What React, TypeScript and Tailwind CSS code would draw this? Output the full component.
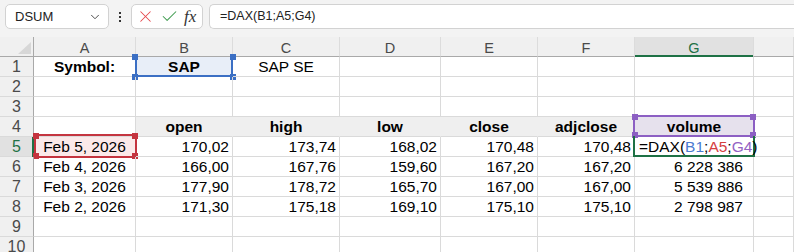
import React from "react";
import { ChevronDown, X, Check } from "lucide-react";

// column widths incl. right gridline: row header, A..G, H (cut off)
const COLS = [34, 102, 97, 107, 101, 97, 97, 119, 40];
const LETTERS = ["", "A", "B", "C", "D", "E", "F", "G", ""];

const rows: { date: string; v: string[]; vol: string }[] = [
  { date: "Feb 5, 2026", v: ["170,02", "173,74", "168,02", "170,48", "170,48"], vol: "" },
  { date: "Feb 4, 2026", v: ["166,00", "167,76", "159,60", "167,20", "167,20"], vol: "6 228 386" },
  { date: "Feb 3, 2026", v: ["177,90", "178,72", "165,70", "167,00", "167,00"], vol: "5 539 886" },
  { date: "Feb 2, 2026", v: ["171,30", "175,18", "169,10", "175,10", "175,10"], vol: "2 798 987" },
];

const Corners = ({ color }: { color: string }) => (
  <>
    <span className={`absolute -left-[3px] -top-[3px] h-[6px] w-[6px] ${color}`} />
    <span className={`absolute -right-[3px] -top-[3px] h-[6px] w-[6px] ${color}`} />
    <span className={`absolute -left-[3px] -bottom-[3px] h-[6px] w-[6px] ${color}`} />
    <span className={`absolute -right-[3px] -bottom-[3px] h-[6px] w-[6px] ${color}`} />
  </>
);

const Cell = ({
  col,
  className = "",
  children,
}: {
  col: number;
  className?: string;
  children?: React.ReactNode;
}) => (
  <div
    style={{ width: COLS[col] }}
    className={`relative h-[20px] shrink-0 border-b border-r border-[#dadada] leading-[19px] whitespace-nowrap ${className}`}
  >
    {children}
  </div>
);

const RowHead = ({ n, active = false }: { n: number; active?: boolean }) => (
  <div
    style={{ width: COLS[0] }}
    className={`relative h-[20px] shrink-0 border-b border-r border-b-[#dadada] border-r-[#a9a9a9] text-center text-[16px] leading-[20px] ${
      active ? "bg-[#e1e1e1] text-[#1e7145]" : "bg-[#f0f0f0] text-[#4a4a4a]"
    }`}
  >
    {n}
    {active && <span className="absolute -right-[1px] top-0 h-[20px] w-[2px] bg-[#1e7145]" />}
  </div>
);

const EmptyRow = ({ n }: { n: number }) => (
  <div className="flex">
    <RowHead n={n} />
    {[1, 2, 3, 4, 5, 6, 7, 8].map((c) => (
      <Cell key={c} col={c} />
    ))}
  </div>
);

export default function App() {
  return (
    <div className="h-[252px] w-[794px] overflow-hidden bg-white font-['Liberation_Sans',Arial,sans-serif] text-[15.5px] text-black">
      {/* formula bar */}
      <div className="flex h-[37px] items-start bg-[#f3f3f3] pl-[5px] pt-[4px]">
        <div className="flex h-[25px] w-[104px] items-center justify-between rounded-[5px] border border-[#d2d2d2] bg-white pl-[9px] pr-[6px] text-[13px] text-[#222]">
          <span>DSUM</span>
          <ChevronDown size={14} strokeWidth={1.6} className="text-[#444]" />
        </div>
        <div className="flex h-[25px] w-[22px] flex-col items-center justify-center gap-[2px]">
          <span className="h-[2px] w-[2px] bg-[#333]" />
          <span className="h-[2px] w-[2px] bg-[#333]" />
          <span className="h-[2px] w-[2px] bg-[#333]" />
        </div>
        <div className="flex h-[25px] w-[72px] items-center gap-[5px] rounded-[5px] border border-[#d2d2d2] bg-white pl-[4px]">
          <X size={19} strokeWidth={1.3} className="text-[#e5484d]" />
          <Check size={19} strokeWidth={1.3} className="text-[#3e9b4f]" />
          <span className="font-['Liberation_Serif',serif] text-[17px] italic leading-none text-[#333]">fx</span>
        </div>
        <div className="ml-[6px] flex h-[25px] flex-1 items-center rounded-l-[5px] border border-r-0 border-[#d2d2d2] bg-white pl-[10px] text-[12.5px] text-[#222]">
          =DAX(B1;A5;G4)
        </div>
      </div>

      {/* column headers */}
      <div className="flex">
        {COLS.map((w, i) => (
          <div
            key={i}
            style={{ width: w }}
            className={`relative flex h-[20px] shrink-0 items-end justify-center border-b border-b-[#a9a9a9] text-[14.5px] leading-none ${
              i === 0 ? "border-r border-r-[#a9a9a9]" : "border-r border-r-[#dcdcdc]"
            } ${i === 7 ? "bg-[#e1e1e1] text-[#1e7145]" : "bg-[#f0f0f0] text-[#4a4a4a]"}`}
          >
            {i === 0 && (
              <svg className="absolute left-[18px] top-[5px]" width="13" height="12" viewBox="0 0 13 12">
                <polygon points="13,0 13,12 0,12" fill="#d7d7d7" />
              </svg>
            )}
            <span className="pb-[1px]">{LETTERS[i]}</span>
            {i === 7 && <span className="absolute -bottom-[1px] left-0 h-[2px] w-full bg-[#1e7145]" />}
          </div>
        ))}
      </div>

      {/* row 1 */}
      <div className="flex">
        <RowHead n={1} />
        <Cell col={1} className="text-center font-bold">Symbol:</Cell>
        <Cell col={2} className="bg-[#e8eef8] text-center font-bold">
          <span className="absolute -bottom-[1px] -left-[1px] -right-[1px] top-0 border-2 border-t-0 border-[#3b6fc4]" />
          <span className="absolute -left-[1px] -right-[1px] -bottom-[1px] top-0">
            <Corners color="bg-[#3b6fc4]" />
          </span>
          <span className="relative">SAP</span>
        </Cell>
        <Cell col={3} className="text-center">SAP SE</Cell>
        <Cell col={4} />
        <Cell col={5} />
        <Cell col={6} />
        <Cell col={7} />
        <Cell col={8} />
      </div>

      <EmptyRow n={2} />
      <EmptyRow n={3} />

      {/* row 4: table header */}
      <div className="flex">
        <RowHead n={4} />
        <Cell col={1} />
        {["open", "high", "low", "close", "adjclose"].map((h, i) => (
          <Cell key={h} col={i + 2} className="border-r-[#efefef] bg-[#efefef] text-center font-bold">
            {h}
          </Cell>
        ))}
        <Cell col={7} className="bg-[#e6e1ed] text-center font-bold">
          <span className="absolute -left-[2px] -right-[2px] -top-[2px] -bottom-[1px] border-2 border-[#8c5fc3]">
            <Corners color="bg-[#8c5fc3]" />
          </span>
          <span className="relative">volume</span>
        </Cell>
        <Cell col={8} />
      </div>

      {/* data rows */}
      {rows.map((r, ri) => (
        <div key={r.date} className="flex">
          <RowHead n={5 + ri} active={ri === 0} />
          <Cell col={1} className={`text-center ${ri === 0 ? "bg-[#fbe9e9]" : ""}`}>
            {ri === 0 && (
              <span className="absolute left-0 -right-[2px] -top-[3px] -bottom-[2px] border-2 border-[#c4343f]">
                <Corners color="bg-[#c4343f]" />
              </span>
            )}
            <span className="relative">{r.date}</span>
          </Cell>
          {r.v.map((v, vi) => (
            <Cell key={vi} col={vi + 2} className="pr-[3px] text-right">
              {v}
            </Cell>
          ))}
          {ri === 0 ? (
            <Cell col={7} className="z-10 overflow-visible pl-[4px]">
              <span className="absolute -left-[2px] -right-[2px] -top-[1px] -bottom-[1px] border-2 border-t-0 border-[#1e7145]" />
              <span className="relative">
                =DAX(<span className="text-[#4a7bd1]">B1</span>;<span className="text-[#d5403f]">A5</span>;<span className="text-[#9363c4]">G4</span>)
              </span>
            </Cell>
          ) : (
            <Cell col={7} className="pr-[10px] text-right">
              {r.vol}
            </Cell>
          )}
          <Cell col={8} />
        </div>
      ))}

      <EmptyRow n={9} />
      <EmptyRow n={10} />
    </div>
  );
}
